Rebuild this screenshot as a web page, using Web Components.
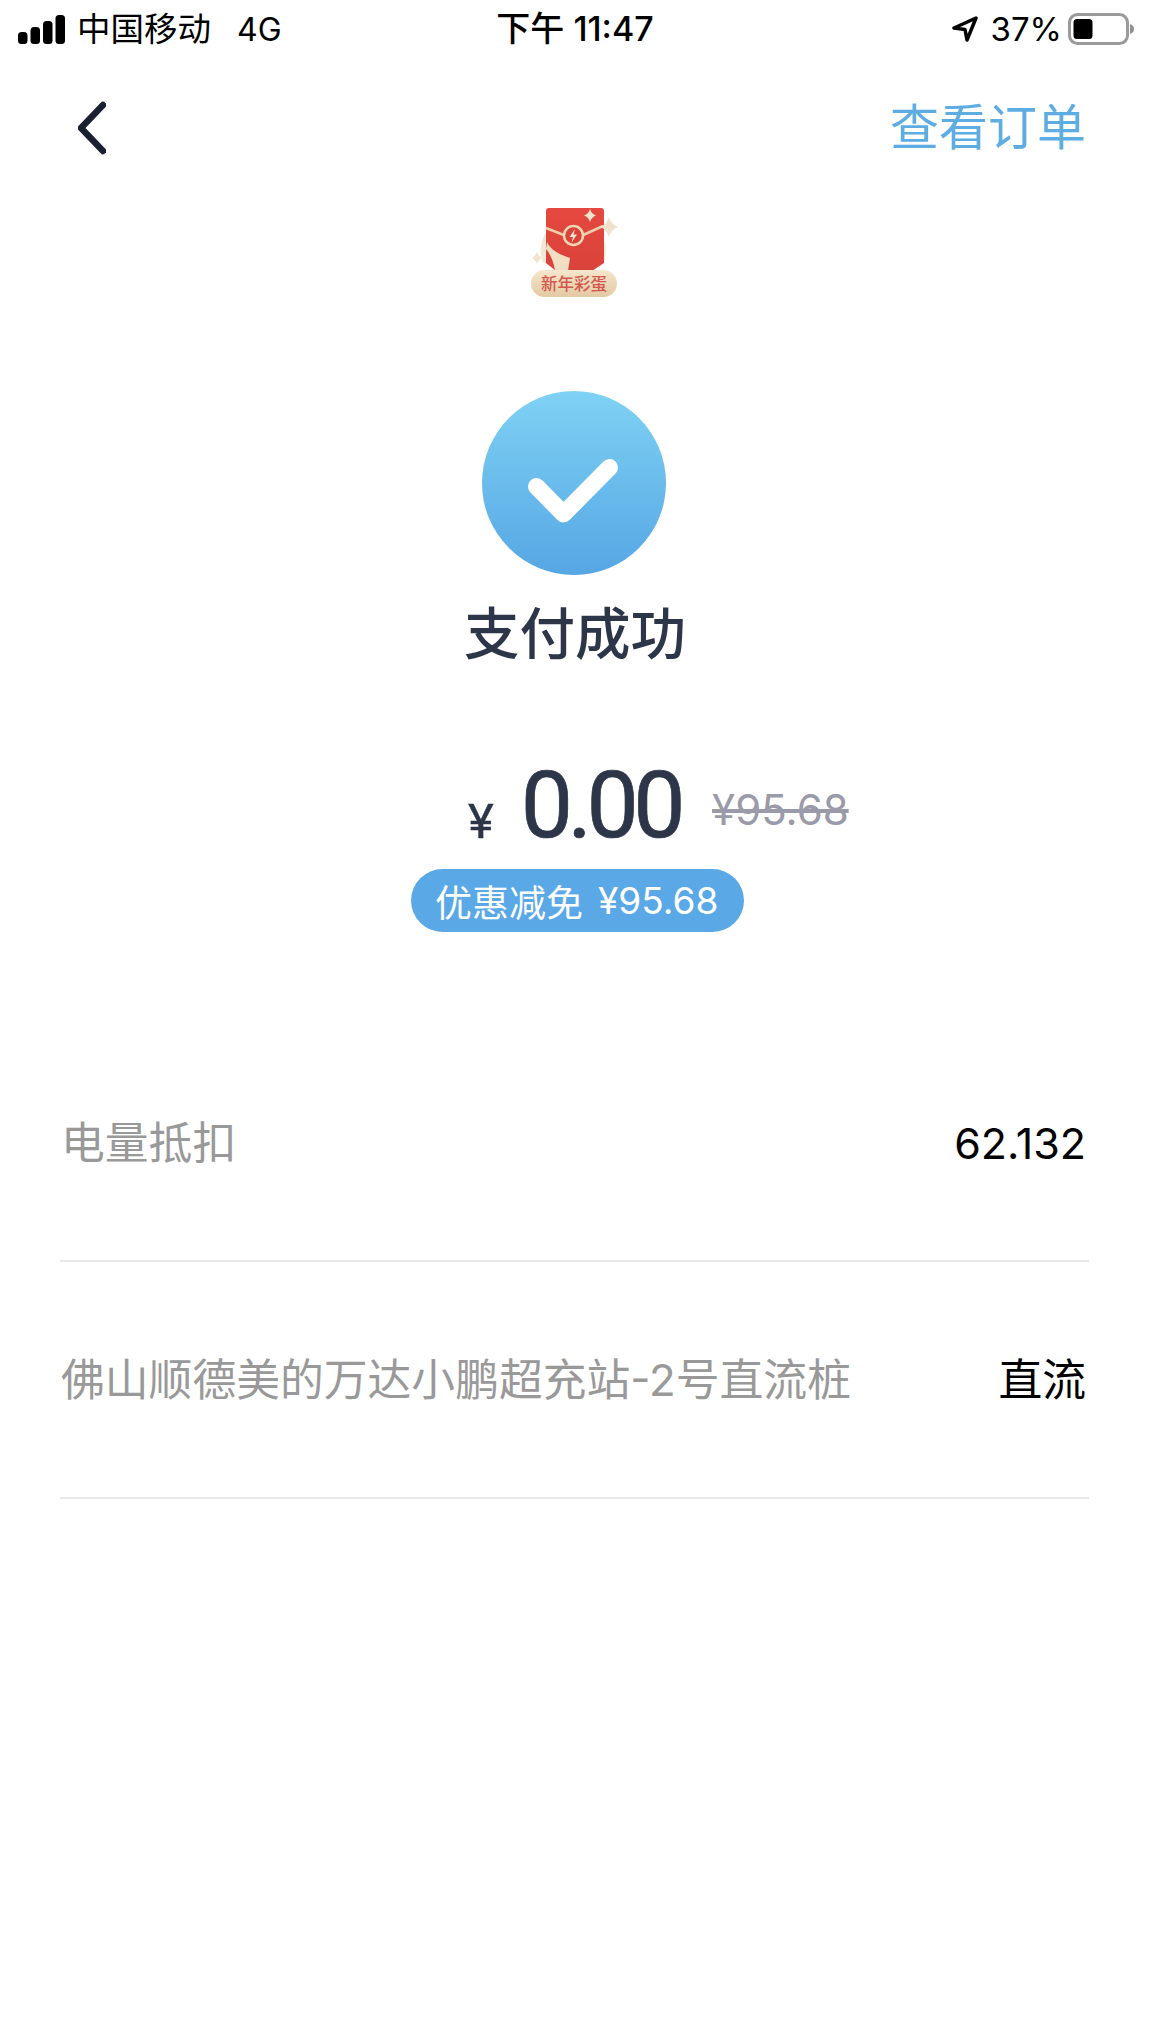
<!DOCTYPE html>
<html lang="zh-CN">
<head>
<meta charset="utf-8">
<title>支付成功</title>
<style>
html,body{margin:0;padding:0;background:#fff;}
body{font-family:"Inter","Noto Sans CJK SC",sans-serif;width:1150px;height:2044px;overflow:hidden;}
</style>
</head>
<body>
<pay-page>
  <status-bar></status-bar>
  <nav-bar>查看订单</nav-bar>
  <promo-badge></promo-badge>
  <success-mark>支付成功</success-mark>
  <amount-block amount="0.00" original="¥95.68" dlabel="优惠减免" dvalue="¥95.68"></amount-block>
  <info-list>
    <info-row label="电量抵扣" value="62.132" numeric></info-row>
    <info-row label="佛山顺德美的万达小鹏超充站-2号直流桩" value="直流"></info-row>
  </info-list>
</pay-page>

<script>
function def(name, html){
  const t=document.createElement('template');
  t.innerHTML=html;
  customElements.define(name,class extends HTMLElement{
    constructor(){
      super();
      const r=this.attachShadow({mode:'open'});
      r.appendChild(t.content.cloneNode(true));
      r.querySelectorAll('[data-attr]').forEach(el=>{el.textContent=this.getAttribute(el.dataset.attr)||'';});
    }
  });
}

def('pay-page',`<style>:host{display:flex;flex-direction:column;width:1150px;height:2044px;background:#fff;}</style><slot></slot>`);

def('status-bar',`<style>
:host{display:grid;grid-template-columns:1fr auto 1fr;align-items:center;height:58px;color:#000;font-family:"Inter","Noto Sans CJK SC",sans-serif;}
.l,.r{display:flex;align-items:center;}
.l{padding-left:18px;font-size:33.500px;}
.r{justify-content:flex-end;padding-right:15px;font-size:33px;}
.c{margin:0 0 5px 12px;}
.n{margin-left:26px;font-size:32px;}
.t{font-size:34px;font-weight:500;margin-bottom:5px;}
.p{margin:0 6px 0 13px;}
svg{display:block;}
</style>
<div class="l">
<svg width="47" height="29" viewBox="0 0 47 29"><rect x="0" y="17" width="9.500" height="12" rx="3.500"/><rect x="12.500" y="12" width="9.500" height="17" rx="3.500"/><rect x="25" y="6" width="9.500" height="23" rx="3.500"/><rect x="37.500" y="0" width="9.500" height="29" rx="3.500"/></svg>
<span class="c">中国移动</span><span class="n">4G</span></div>
<div class="t">下午 11:47</div>
<div class="r">
<svg width="26" height="26" viewBox="0 0 26 26"><path d="M24 2 2 12l11 1.500L15 24Z" fill="none" stroke="#000" stroke-width="3.500" stroke-linejoin="round"/></svg>
<span class="p">37%</span>
<svg width="67" height="32" viewBox="0 0 67 32"><rect x="1.500" y="1.500" width="58" height="29" rx="8" fill="none" stroke="#9a9a9a" stroke-width="3"/><rect x="5.500" y="6" width="19" height="20" rx="3.500"/><path d="M62 11c3 1 4 3 4 5s-1 4-4 5Z" fill="#8f8f8f"/></svg>
</div>`);

def('nav-bar',`<style>
:host{display:flex;align-items:center;justify-content:space-between;height:68px;margin-top:36px;padding:0 64px 0 78px;}
a{font-size:49px;color:#5dade2;font-family:"Noto Sans CJK SC",sans-serif;font-weight:400;line-height:68px;margin-bottom:8px;}
svg{display:block;}
</style>
<svg width="28" height="56" viewBox="0 0 28 56"><path d="M25 5 3 28l22 23" fill="none" stroke="#1b2030" stroke-width="6.500" stroke-linecap="round" stroke-linejoin="round"/></svg>
<a><slot></slot></a>`);

def('promo-badge',`<style>
:host{display:flex;justify-content:center;padding:33px 0 0 0;}
.w{position:relative;width:120px;height:110px;margin-left:-10px;}
svg{display:block;}
.lbl{position:absolute;left:21px;width:86px;top:75px;height:27px;line-height:27px;text-align:center;font-size:16.500px;color:#d4574d;font-family:"Noto Sans CJK SC",sans-serif;font-weight:500;white-space:nowrap;}
</style>
<div class="w">
<svg width="120" height="110" viewBox="0 0 120 110">
<defs>
<linearGradient id="pg" x1="0" y1="0" x2="0" y2="1"><stop offset="0" stop-color="#f5e6cd"/><stop offset="1" stop-color="#e3c9a2"/></linearGradient>
<linearGradient id="rg" x1="0" y1="0" x2="0" y2="1"><stop offset="0" stop-color="#e5483f"/><stop offset="1" stop-color="#d9423a"/></linearGradient>
</defs>
<path d="M36 38c-6 8-6 20-4 28 4 8 60 8 62 0 3-8 2-18-2-24Z" fill="#f3e7d5"/>
<path d="M36 16a3 3 0 0 1 3-3h52a3 3 0 0 1 3 3v52l-12 8H46l-10-8Z" fill="url(#rg)"/>
<path d="M36 33 55 40.500 M72 40.500 93 31" stroke="#eccfa9" stroke-width="2.500" fill="none"/>
<path d="M37 47c4 8 11 12 23 16l-2 13H45c-1-8-4-16-9-22Z" fill="#f2dfc3"/>
<circle cx="63.500" cy="40.500" r="9.500" fill="#d9433a" stroke="#f1d6b3" stroke-width="2.500"/>
<path d="M65 34 59.500 42h3.500l-1.500 5.500 5.500-8h-3.500Z" fill="#f7e6cf"/>
<path d="M80 14q1.500 5 6 6.500q-4.500 1.500-6 6.500q-1.500-5-6-6.500q4.500-1.500 6-6.500Z" fill="#f7e3cb"/>
<path d="M99 22q2 7.500 9 10q-7 2.500-9 10q-2-7.500-9-10q7-2.500 9-10Z" fill="#f1e2cb"/>
<path d="M27 57q1.500 4.500 5 6q-3.500 1.500-5 6q-1.500-4.500-5-6q3.500-1.500 5-6Z" fill="#f1e2cb"/>
<rect x="21" y="75" width="86" height="27" rx="13.500" fill="url(#pg)"/>
</svg>
<div class="lbl">新年彩蛋</div>
</div>`);

def('success-mark',`<style>
:host{display:flex;flex-direction:column;align-items:center;margin-top:86px;}
svg{display:block;margin-left:-3px;}
h1{margin:11px 0 0;font-size:55.500px;line-height:88px;font-weight:500;color:#2d3648;font-family:"Noto Sans CJK SC",sans-serif;}
</style>
<svg width="184" height="184" viewBox="0 0 184 184">
<defs><linearGradient id="g" x1="0" y1="0" x2="0" y2="1"><stop offset="0" stop-color="#7fd2f4"/><stop offset="1" stop-color="#56a6e4"/></linearGradient></defs>
<circle cx="92" cy="92" r="92" fill="url(#g)"/>
<path d="M54.500 95.500 81.500 123 127.500 76.500" fill="none" stroke="#fff" stroke-width="17" stroke-linecap="round" stroke-linejoin="round"/>
</svg>
<h1><slot></slot></h1>`);

def('amount-block',`<style>
:host{display:flex;flex-direction:column;align-items:flex-start;margin-top:75px;padding-left:411px;}
.top{display:flex;align-items:flex-start;height:114px;margin-left:57px;color:#2d3648;font-family:"Roboto","Noto Sans CJK SC",sans-serif;white-space:nowrap;}
.y{font-size:49px;line-height:48px;margin-top:49px;font-weight:400;-webkit-text-stroke:.4px #2d3648;}
.a{font-size:93px;line-height:114px;font-weight:400;-webkit-text-stroke:.7px #2d3648;margin-left:27px;letter-spacing:-5.500px;}
.o{font-family:"Inter",sans-serif;font-size:42px;line-height:44px;margin-top:39px;color:#9a9aa8;margin-left:32px;text-decoration:line-through;}
.pill{display:flex;align-items:center;gap:15px;margin-top:6px;height:63px;width:333px;box-sizing:border-box;padding-left:24px;border-radius:32px;background:#5aa9e6;color:#fff;font-family:"Inter","Noto Sans CJK SC",sans-serif;white-space:nowrap;}
.dl{font-size:37px;}
.dv{font-size:37px;}
</style>
<div class="top"><span class="y">¥</span><span class="a" data-attr="amount"></span><span class="o" data-attr="original"></span></div>
<div class="pill"><span class="dl" data-attr="dlabel"></span><span class="dv" data-attr="dvalue"></span></div>`);

def('info-list',`<style>:host{display:block;margin:93px 61px 0 60px;}</style><slot></slot>`);

def('info-row',`<style>
:host{display:flex;justify-content:space-between;align-items:center;box-sizing:border-box;height:237px;padding:0 3px 0 1px;border-bottom:2px solid #e9e9e9;font-family:"Inter","Noto Sans CJK SC",sans-serif;font-size:43.800px;}
:host([numeric]) .v{font-size:43px;margin-bottom:0;}
.l{color:#999;margin-bottom:5px;}
.v{color:#000;margin-bottom:5px;}
</style>
<span class="l" data-attr="label"></span><span class="v" data-attr="value"></span>`);
</script>
</body>
</html>
